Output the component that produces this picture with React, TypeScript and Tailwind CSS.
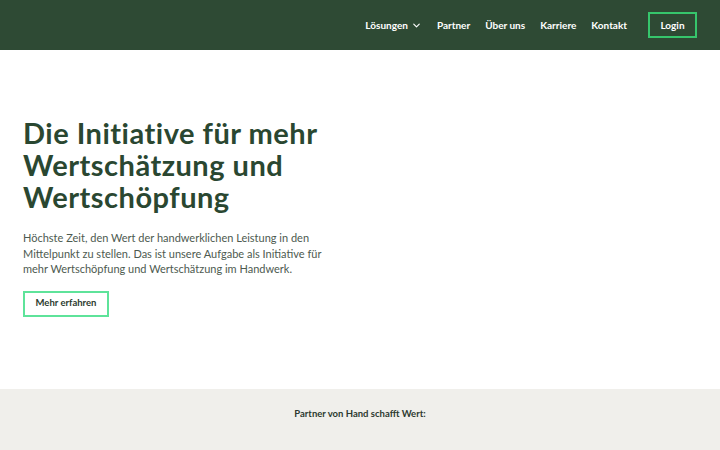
import { ChevronDown } from "lucide-react";

export default function App() {
  const nav = ["Partner", "Über uns", "Karriere", "Kontakt"];
  return (
    <div className="min-h-[450px] bg-white font-['Lato',sans-serif]">
      <header className="h-[50px] bg-[#2e4a34] flex items-center justify-end pr-[23px]">
        <nav className="flex items-center gap-[15px] text-[10px] font-bold text-white">
          <span className="flex items-center gap-[3px]">
            Lösungen <ChevronDown size={11} strokeWidth={2.5} />
          </span>
          {nav.map((n) => (
            <span key={n}>{n}</span>
          ))}
        </nav>
        <button className="ml-[21px] h-[26px] w-[49px] border-2 border-[#36c66c] text-[10px] font-bold text-white">
          Login
        </button>
      </header>

      <section className="px-[23px] pt-[67px] h-[339px]">
        <h1 className="text-[29px] leading-[32px] font-bold text-[#2a4731] tracking-[0.5px]">
          <span className="block">Die Initiative für mehr</span>
          <span className="block">Wertschätzung und</span>
          <span className="block">Wertschöpfung</span>
        </h1>
        <p className="mt-[17px] w-[310px] text-[11px] leading-[15.5px] text-[#4d5a50]">
          Höchste Zeit, den Wert der handwerklichen Leistung in den Mittelpunkt zu stellen. Das
          ist unsere Aufgabe als Initiative für mehr Wertschöpfung und Wertschätzung im Handwerk.
        </p>
        <button className="mt-[14px] h-[26px] w-[86px] border-2 border-[#5ee39a] text-[9.5px] font-bold text-[#2b3a2e]">
          Mehr erfahren
        </button>
      </section>

      <section className="h-[61px] bg-[#f0efeb] pt-[18px] text-center">
        <p className="text-[9.5px] font-bold text-[#2c3a30]">Partner von Hand schafft Wert:</p>
      </section>
    </div>
  );
}
